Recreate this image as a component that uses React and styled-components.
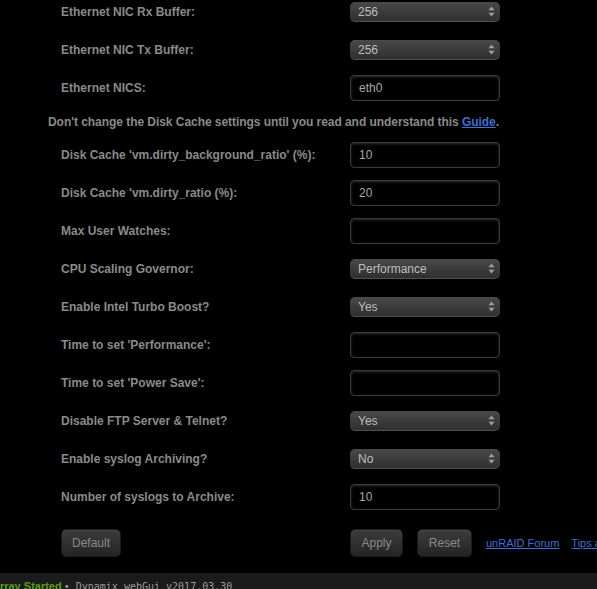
import React from "react";
import styled, { createGlobalStyle } from "styled-components";

const Global = createGlobalStyle`
  html, body {
    margin: 0;
    padding: 0;
    background: #000;
    overflow: hidden;
  }
  body {
    font-family: "Liberation Sans", Arial, sans-serif;
    font-size: 12px;
  }
`;

const Page = styled.div`
  width: 597px;
  height: 589px;
  display: flex;
  flex-direction: column;
  overflow: hidden;
`;

const Form = styled.div`
  display: flex;
  flex-direction: column;
  margin-top: -7px;
`;

const Row = styled.div`
  display: grid;
  grid-template-columns: 289px 150px;
  align-items: center;
  height: 38px;
  padding-left: 61px;
`;

const Label = styled.div`
  color: #8a8a8a;
  font-weight: bold;
  font-size: 12px;
`;

const Note = styled.div`
  height: 29px;
  display: flex;
  align-items: center;
  padding-left: 48px;
  color: #8a8a8a;
  font-weight: bold;
  font-size: 12px;
  letter-spacing: -0.05px;
  white-space: nowrap;
`;

const Link = styled.a`
  color: #3f6fd6;
  text-decoration: underline;
  cursor: pointer;
`;

const SelectBox = styled.div`
  box-sizing: border-box;
  height: 20px;
  width: 150px;
  display: flex;
  align-items: center;
  justify-content: space-between;
  padding: 0 5px 0 8px;
  border-radius: 5px;
  background: linear-gradient(#494949, #2f2f2f);
  border-bottom: 1px solid #505050;
  color: #bdbdbd;
  font-size: 12px;
`;

const TextBox = styled.div`
  box-sizing: border-box;
  height: 26px;
  width: 150px;
  display: flex;
  align-items: center;
  padding: 0 8px;
  background: #000;
  border: 1px solid #3a3a3a;
  border-radius: 4px;
  box-shadow: inset 0 1px 3px rgba(90, 90, 90, 0.55);
  color: #a8a8a8;
  font-size: 12px;
`;

const Arrows = () => (
  <svg width="7" height="11" viewBox="0 0 7 11">
    <path d="M3.5 0.5 L6.5 4.2 H0.5 Z" fill="#a0a0a0" />
    <path d="M3.5 10.5 L6.5 6.8 H0.5 Z" fill="#a0a0a0" />
  </svg>
);

const Select = ({ value }) => (
  <SelectBox>
    <span>{value}</span>
    <Arrows />
  </SelectBox>
);

const Actions = styled.div`
  display: flex;
  align-items: center;
  padding: 13px 0 16px 61px;
  white-space: nowrap;
`;

const Button = styled.button`
  box-sizing: border-box;
  height: 28px;
  width: ${(p) => p.$w}px;
  margin-right: ${(p) => p.$mr || 0}px;
  padding: 0;
  border: 1px solid #1c1c1c;
  border-radius: 5px;
  background: linear-gradient(#3c3c3c, #242424);
  box-shadow: inset 0 1px 0 #484848;
  color: #8a8a8a;
  font-family: "Liberation Sans", Arial, sans-serif;
  font-size: 12px;
  flex-shrink: 0;
`;

const Links = styled.div`
  display: flex;
  gap: 12px;
  font-size: 11px;
`;

const Footer = styled.div`
  height: 30px;
  background: #1b1b1b;
  display: flex;
  align-items: flex-start;
  padding-top: 6px;
  margin-left: -8px;
  white-space: nowrap;
`;

const Status = styled.span`
  color: #5a9e18;
  font-weight: bold;
  font-size: 11px;
  line-height: 15px;
`;

const Version = styled.span`
  color: #9a9a9a;
  font-family: "DejaVu Sans Mono", monospace;
  font-size: 10px;
  line-height: 15px;
  margin-left: 2px;
`;

const top = [
  ["Ethernet NIC Rx Buffer:", "select", "256"],
  ["Ethernet NIC Tx Buffer:", "select", "256"],
  ["Ethernet NICS:", "text", "eth0"],
];

const rest = [
  ["Disk Cache 'vm.dirty_background_ratio' (%):", "text", "10"],
  ["Disk Cache 'vm.dirty_ratio (%):", "text", "20"],
  ["Max User Watches:", "text", ""],
  ["CPU Scaling Governor:", "select", "Performance"],
  ["Enable Intel Turbo Boost?", "select", "Yes"],
  ["Time to set 'Performance':", "text", ""],
  ["Time to set 'Power Save':", "text", ""],
  ["Disable FTP Server & Telnet?", "select", "Yes"],
  ["Enable syslog Archiving?", "select", "No"],
  ["Number of syslogs to Archive:", "text", "10"],
];

const Field = ({ label, kind, value }) => (
  <Row>
    <Label>{label}</Label>
    {kind === "select" ? <Select value={value} /> : <TextBox>{value}</TextBox>}
  </Row>
);

export default function App() {
  return (
    <Page>
      <Global />
      <Form>
        {top.map(([l, k, v]) => (
          <Field key={l} label={l} kind={k} value={v} />
        ))}
        <Note>
          Don't change the Disk Cache settings until you read and understand this&nbsp;
          <Link>Guide</Link>.
        </Note>
        {rest.map(([l, k, v]) => (
          <Field key={l} label={l} kind={k} value={v} />
        ))}
      </Form>
      <Actions>
        <Button $w={60} $mr={229}>Default</Button>
        <Button $w={53} $mr={14}>Apply</Button>
        <Button $w={55} $mr={14}>Reset</Button>
        <Links>
          <Link>unRAID Forum</Link>
          <Link>Tips and Tweaks</Link>
        </Links>
      </Actions>
      <Footer>
        <Status>Array Started</Status>
        <Version>• Dynamix webGui v2017.03.30</Version>
      </Footer>
    </Page>
  );
}
